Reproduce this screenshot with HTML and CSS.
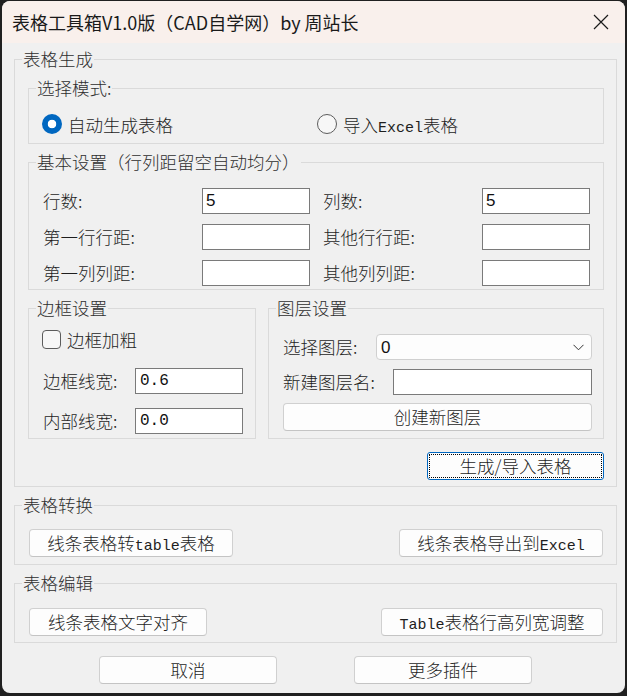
FILE: index.html
```html
<!DOCTYPE html>
<html lang="zh-CN">
<head>
<meta charset="utf-8">
<title>表格工具箱</title>
<link rel="stylesheet" href="styles.css">
</head>
<body>
<div class="window">
  <div class="titlebar">
    <span class="title">表格工具箱V1.0版（CAD自学网）by 周站长</span>
    <svg class="close" width="16" height="16" viewBox="0 0 16 16"><path d="M1 1 L15 15 M15 1 L1 15" stroke="#1a1a1a" stroke-width="1.2" fill="none"/></svg>
  </div>
  <div class="content">
    <fieldset class="group outer">
      <legend>表格生成</legend>
      <div class="gen-body">
        <fieldset class="group inner">
          <legend>选择模式:</legend>
          <div class="mode-body">
            <div class="radio-item first"><span class="radio checked"></span><span>自动生成表格</span></div>
            <div class="radio-item"><span class="radio"></span><span>导入<span class="lat">Excel</span>表格</span></div>
          </div>
        </fieldset>
        <fieldset class="group inner basic">
          <legend>基本设置（行列距留空自动均分）</legend>
          <div class="basic-grid">
            <span class="lbl">行数:</span><div class="input sans">5</div>
            <span class="lbl">列数:</span><div class="input sans">5</div>
            <span class="lbl">第一行行距:</span><div class="input"></div>
            <span class="lbl">其他行行距:</span><div class="input"></div>
            <span class="lbl">第一列列距:</span><div class="input"></div>
            <span class="lbl">其他列列距:</span><div class="input"></div>
          </div>
        </fieldset>
        <div class="split">
          <fieldset class="group border-set">
            <legend>边框设置</legend>
            <div class="bs-body">
              <div class="check-item"><span class="box"></span><span>边框加粗</span></div>
              <div class="lrow first-row"><span class="lbl bs-lbl">边框线宽:</span><div class="input mono">0.6</div></div>
              <div class="lrow"><span class="lbl bs-lbl">内部线宽:</span><div class="input mono">0.0</div></div>
            </div>
          </fieldset>
          <fieldset class="group layer-set">
            <legend>图层设置</legend>
            <div class="ls-body">
              <div class="lrow"><span class="lbl ls-lbl1">选择图层:</span>
                <div class="select"><span class="sel-val">0</span>
                  <svg class="chev" width="11" height="7" viewBox="0 0 11 7"><path d="M0.5 0.8 L5.5 5.8 L10.5 0.8" stroke="#333" stroke-width="1" fill="none"/></svg>
                </div>
              </div>
              <div class="lrow gap9"><span class="lbl ls-lbl2">新建图层名:</span><div class="input grow"></div></div>
              <button class="btn wide gap8">创建新图层</button>
            </div>
          </fieldset>
        </div>
        <div class="gen-actions"><button class="btn default">生成/导入表格</button></div>
      </div>
    </fieldset>

    <fieldset class="group outer sect conv">
      <legend>表格转换</legend>
      <div class="btn-row">
        <button class="btn w204">线条表格转<span class="lat">table</span>表格</button>
        <button class="btn w204">线条表格导出到<span class="lat">Excel</span></button>
      </div>
    </fieldset>

    <fieldset class="group outer sect edit">
      <legend>表格编辑</legend>
      <div class="btn-row">
        <button class="btn w178">线条表格文字对齐</button>
        <button class="btn w222"><span class="lat">Table</span>表格行高列宽调整</button>
      </div>
    </fieldset>

    <div class="bottom-row">
      <button class="btn w178">取消</button>
      <button class="btn w178">更多插件</button>
    </div>
  </div>
</div>
</body>
</html>
```

FILE: styles.css
```css
* { box-sizing: border-box; }

html, body {
  margin: 0;
  padding: 0;
}

body {
  width: 627px;
  height: 696px;
  overflow: hidden;
  background: #202020;
  font-family: "Noto Sans CJK SC", sans-serif;
  color: #1e1e1e;
}

.window {
  margin: 1px 0 0 2px;
  width: 623px;
  height: 692px;
  background: #f0f0f0;
  border-radius: 8px;
  overflow: hidden;
}

.titlebar {
  height: 42px;
  background: #f9f0ec;
  display: flex;
  align-items: center;
  justify-content: space-between;
  padding: 0 16px 0 10px;
}

.title {
  font-size: 18px;
  line-height: 22px;
  color: #1a1a1a;
  margin-top: -1px;
}

.close { display: block; }

.content {
  padding: 6px 0 0 12px;
}

fieldset.group {
  margin: 0;
  padding: 0;
  border: 1px solid #dadada;
  min-width: 0;
}

fieldset.group.basic,
fieldset.group.sect {
  margin-top: 8px;
}

legend {
  padding: 0 1px;
  margin-left: 7px;
  height: 20px;
  line-height: 20px;
  font-size: 17.5px;
  font-weight: 300;
  color: #2e2e2e;
}

.outer { width: 603px; }

.gen-body {
  padding: 9px 12px 6px 13px;
}

.inner { width: 576px; }

.mode-body {
  display: flex;
  padding: 16px 0 9px 13px;
}

.radio-item {
  display: flex;
  align-items: center;
  gap: 6px;
  height: 20px;
  font-size: 17.5px;
  font-weight: 300;
}

.radio-item.first { width: 275px; }

.radio {
  width: 20px;
  height: 20px;
  border-radius: 50%;
  border: 1px solid #5c5c5c;
  background: #f7f7f7;
  flex: none;
}

.radio.checked {
  border: none;
  background: radial-gradient(circle, #ffffff 0 4px, #0067c0 4.6px);
}

.lat {
  font-family: "Liberation Mono", monospace;
  font-size: 15px;
  font-weight: 400;
}

.basic-grid {
  display: grid;
  grid-template-columns: 159px 121px 159px 108px;
  grid-auto-rows: 26px;
  row-gap: 10px;
  padding: 16px 0 3px 14px;
  align-items: center;
}

.lbl {
  font-size: 17.5px;
  font-weight: 300;
  line-height: 26px;
  white-space: nowrap;
}

.input {
  width: 108px;
  height: 26px;
  background: #ffffff;
  border: 1px solid #7a7a7a;
  padding-left: 3px;
  line-height: 24px;
  color: #111;
}

.input.sans {
  font-family: "Liberation Sans", sans-serif;
  font-size: 17px;
}

.input.mono {
  font-family: "Liberation Mono", monospace;
  font-size: 16px;
  padding-left: 4px;
}

.split {
  display: flex;
  gap: 12px;
  margin-top: 8px;
}

.border-set { width: 228px; }
.layer-set { width: 336px; }

.bs-body {
  padding: 11px 0 4px 13px;
}

.check-item {
  display: flex;
  align-items: center;
  gap: 6px;
  height: 20px;
  font-size: 17.5px;
  font-weight: 300;
}

.box {
  width: 19px;
  height: 19px;
  border: 1px solid #5c5c5c;
  border-radius: 4px;
  background: #f7f7f7;
  flex: none;
}

.lrow {
  display: flex;
  align-items: center;
  height: 26px;
  margin-top: 14px;
}

.lrow.first-row { margin-top: 19px; }

.bs-lbl { width: 93px; padding-left: 1px; }

.ls-body {
  padding: 16px 11px 7px 14px;
}

.ls-body .lrow { margin-top: 0; }
.ls-body .lrow.gap9 { margin-top: 9px; }

.ls-lbl1 { width: 93px; }
.ls-lbl2 { width: 110px; }

.select {
  flex: 1;
  height: 26px;
  background: #fdfdfd;
  border: 1px solid #d0d0d0;
  border-radius: 4px;
  display: flex;
  align-items: center;
  justify-content: space-between;
  padding: 0 7px 0 4px;
}

.sel-val {
  font-family: "Liberation Sans", sans-serif;
  font-size: 17px;
  color: #111;
  margin-top: 2px;
}

.chev { display: block; }

.input.grow { flex: 1; width: auto; }

.btn {
  height: 28px;
  background: #fdfdfd;
  border: 1px solid #d0d0d0;
  border-bottom-color: #c4c4c4;
  border-radius: 4px;
  font-family: "Noto Sans CJK SC", sans-serif;
  font-size: 17.5px;
  font-weight: 300;
  color: #1e1e1e;
  padding: 0;
  line-height: 26px;
  display: block;
  text-align: center;
}

.btn.wide { width: 100%; }
.btn.gap8 { margin-top: 8px; }

.gen-actions {
  display: flex;
  justify-content: flex-end;
  margin-top: 13px;
}

.btn.default {
  width: 177px;
  border: 1px solid #0067c0;
  border-radius: 3px;
  outline: 1px dotted #000;
  outline-offset: -3px;
}

.btn-row {
  display: flex;
  justify-content: space-between;
  padding: 14px 13px 7px 14px;
}

.edit .btn-row { padding-top: 15px; padding-bottom: 6px; }

.w204 { width: 204px; }
.w178 { width: 178px; }
.w222 { width: 222px; }

.bottom-row {
  display: flex;
  gap: 77px;
  margin-top: 13px;
  padding-left: 85px;
}
```
